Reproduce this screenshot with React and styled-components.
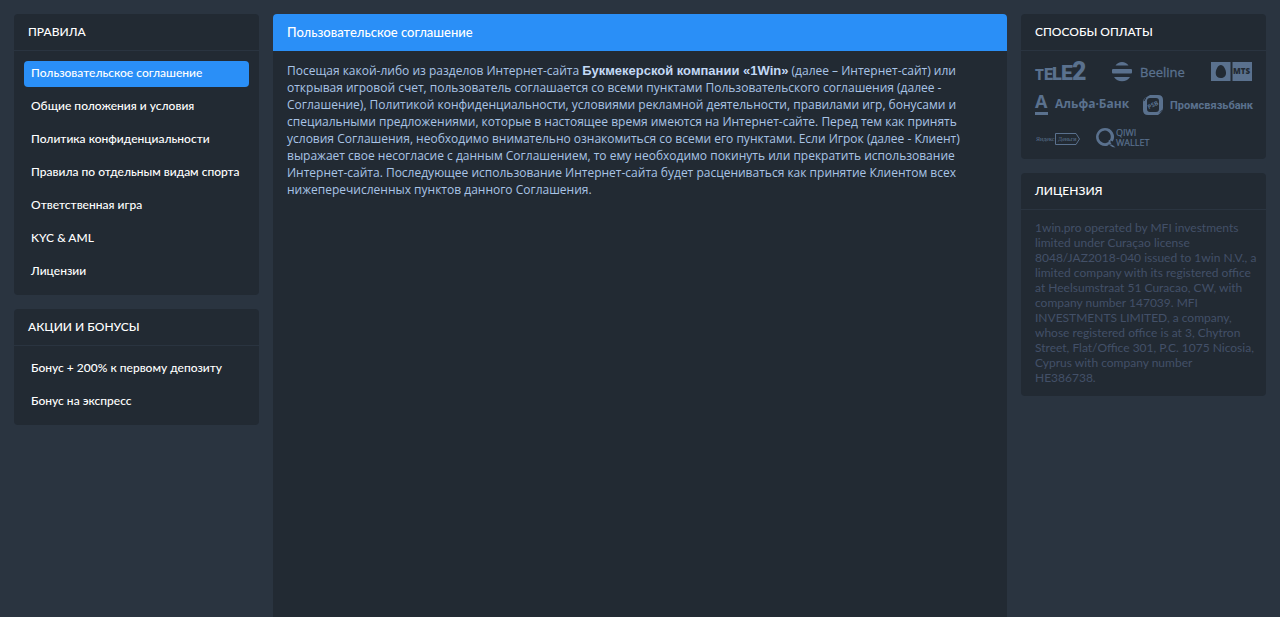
import React from "react";
import styled, { createGlobalStyle, ThemeProvider } from "styled-components";

const theme = {
  page: "#2a3440",
  card: "#222a33",
  line: "#2a3440",
  accent: "#2a8ff7",
  heading: "#ffffff",
  body: "#a9c4e6",
  muted: "#435068",
  logo: "#5a718e",
};

const GlobalStyle = createGlobalStyle`
  *, *::before, *::after { box-sizing: border-box; }
  body {
    margin: 0;
    background: ${theme.page};
    color: ${theme.heading};
    font-family: Lato, "Open Sans", sans-serif;
    font-size: 12px;
    line-height: 15px;
  }
`;

const Page = styled.div`
  display: grid;
  grid-template-columns: 245px minmax(0, 1fr) 245px;
  gap: 14px;
  min-height: 100vh;
  padding: 14px 14px 0;
`;

const Column = styled.aside`
  display: flex;
  flex-direction: column;
  gap: 14px;
`;

const Card = styled.section`
  background: ${(p) => p.theme.card};
  border-radius: 4px;
`;

const CardTitle = styled.h2`
  margin: 0;
  padding: 10px 14px 11px;
  border-bottom: 1px solid ${(p) => p.theme.line};
  font-size: 12px;
  font-weight: 500;
  line-height: 15px;
  text-transform: uppercase;
`;

const Menu = styled.ul`
  display: flex;
  flex-direction: column;
  gap: 7px;
  margin: 0;
  padding: 10px;
  list-style: none;
`;

const MenuLink = styled.a`
  display: block;
  padding: 4px 7px 7px;
  border-radius: 4px;
  background: ${(p) => (p.$active ? p.theme.accent : "transparent")};
  color: ${(p) => p.theme.heading};
  font-weight: 500;
  text-decoration: none;
  white-space: nowrap;
`;

const Article = styled.main`
  background: ${(p) => p.theme.card};
  border-radius: 4px 4px 0 0;
  overflow: hidden;
`;

const ArticleTitle = styled.h1`
  margin: 0;
  padding: 10px 14px;
  background: ${(p) => p.theme.accent};
  font-size: 13px;
  font-weight: 500;
  line-height: 17px;
`;

const ArticleText = styled.p`
  margin: 0;
  padding: 11px 14px;
  color: ${(p) => p.theme.body};
  font-family: "Open Sans", sans-serif;
  line-height: 17px;

  strong {
    font-family: "Liberation Sans", sans-serif;
    font-size: 13px;
    font-weight: 700;
    line-height: 1;
    color: #c3d9f5;
  }
`;

const LicenseText = styled.p`
  margin: 0;
  padding: 10px 8px 11px 14px;
  color: ${(p) => p.theme.muted};
`;

const Payments = styled.div`
  display: flex;
  flex-direction: column;
  gap: 11px;
  padding: 10px 14px;
`;

const PaymentRow = styled.div`
  display: flex;
  justify-content: ${(p) => (p.$start ? "flex-start" : "space-between")};
  gap: 13px;
`;

const Logo = styled.svg`
  display: block;
  flex: none;
  overflow: visible;
  fill: ${(p) => p.theme.logo};
  stroke: none;
  font-family: "Open Sans", sans-serif;
`;

const Tele2 = () => (
  <Logo width="51" height="22" role="img" aria-label="Tele2">
    <text y="19" fontFamily="Roboto, sans-serif" fontWeight="900">
      <tspan x="0" fontSize="14">T</tspan>
      <tspan x="9" fontSize="16">E</tspan>
      <tspan x="17" fontSize="18">L</tspan>
      <tspan x="26" fontSize="21">E</tspan>
      <tspan x="37" fontSize="25">2</tspan>
    </text>
  </Logo>
);

const Beeline = () => (
  <Logo width="73" height="22" role="img" aria-label="Beeline">
    <path d="M3.500 4.600 C5 2.200 7.300 1 10 1 C12.700 1 15 2.200 16.500 4.600 Z" />
    <rect x="0" y="8" width="20" height="4.500" rx="1" />
    <path d="M2 16 H18 C16 19 13.500 20.300 10 20.300 C6.500 20.300 4 19 2 16 Z" />
    <text x="28" y="16" fontSize="13" stroke={theme.logo} strokeWidth="0.3">Beeline</text>
  </Logo>
);

const Mts = () => (
  <Logo width="41" height="22" role="img" aria-label="MTS">
    <rect x="0" y="1" width="19.500" height="19" />
    <rect x="21.500" y="1" width="19.500" height="19" />
    <path fill={theme.card} d="M9.800 4 C12.500 4 15 8.500 15 12 C15 15.300 12.800 17 9.800 17 C6.800 17 4.700 15.300 4.700 12 C4.700 8.500 7.100 4 9.800 4 Z" />
    <text x="22" y="13" fontSize="8" fontWeight="800" fill={theme.card}>MTS</text>
  </Logo>
);

const Alfa = () => (
  <Logo width="95" height="22" role="img" aria-label="Альфа-Банк">
    <text x="0" y="14" fontSize="18" fontWeight="700">А</text>
    <rect x="0" y="18" width="13" height="3" />
    <text x="20" y="14" fontSize="12" fontWeight="700">Альфа·Банк</text>
  </Logo>
);

const Psb = () => (
  <Logo width="109" height="22" role="img" aria-label="Промсвязьбанк">
    <path fillRule="evenodd" d="M7 1 H15 Q20 1 20 6 V14 Q20 17 17.500 19 L15 21 H5 Q0 21 0 16 V8 Q0 5.500 2 4 Z M7 4 Q4 4 4 7 V15 Q4 18 7 18 H13 Q16 18 16 15 V7 Q16 4 13 4 Z" />
    <path d="M3 3.500 L1 7 M17 18.500 L19.500 16" stroke={theme.card} strokeWidth="1" />
    <text x="10" y="13" fontSize="6" fontWeight="700" textAnchor="middle" transform="rotate(-25 10 11)">PSB</text>
    <text x="27" y="15" fontSize="11" fontWeight="700" fontFamily="Roboto, sans-serif">Промсвязьбанк</text>
  </Logo>
);

const Yandex = () => (
  <Logo width="48" height="22" role="img" aria-label="Яндекс Деньги">
    <g fontFamily="Liberation Serif, serif" fontSize="6">
      <text x="1" y="14">Яндекс</text>
      <text x="23" y="14">Деньги</text>
    </g>
    <path fill="none" stroke={theme.logo} d="M20.500 6.500 H41 L44.500 12 L41 17.500 H20.500 Z" />
  </Logo>
);

const Qiwi = () => (
  <Logo width="54" height="22" role="img" aria-label="QIWI Wallet">
    <path fillRule="evenodd" d="M9 1 A9 9 0 0 1 16.800 14.500 L14.500 13.500 Q14 15.500 16 17.500 Q12.500 16.500 12 18.500 A9 9 0 1 1 9 1 Z M9 3.500 A6.300 6.300 0 1 0 12.500 15 Q12 13 14 12.800 A6.300 6.300 0 0 0 9 3.500 Z" />
    <path d="M13 17.500 Q17 17.200 19.500 20.500 Q15 20 13 17.500 Z" />
    <text x="20" y="9" fontSize="9" stroke={theme.logo} strokeWidth="0.2">QIWI</text>
    <text x="20" y="19" fontSize="9" stroke={theme.logo} strokeWidth="0.2">WALLET</text>
  </Logo>
);

const rules = [
  "Пользовательское соглашение",
  "Общие положения и условия",
  "Политика конфиденциальности",
  "Правила по отдельным видам спорта",
  "Ответственная игра",
  "KYC & AML",
  "Лицензии",
];

const bonuses = ["Бонус + 200% к первому депозиту", "Бонус на экспресс"];

function MenuCard({ title, items, active }) {
  return (
    <Card>
      <CardTitle>{title}</CardTitle>
      <nav aria-label={title}>
        <Menu>
          {items.map((item, i) => (
            <li key={item}>
              <MenuLink href="#" $active={i === active} aria-current={i === active ? "page" : undefined}>
                {item}
              </MenuLink>
            </li>
          ))}
        </Menu>
      </nav>
    </Card>
  );
}

export default function App() {
  return (
    <ThemeProvider theme={theme}>
      <GlobalStyle />
      <Page>
        <Column>
          <MenuCard title="Правила" items={rules} active={0} />
          <MenuCard title="Акции и бонусы" items={bonuses} />
        </Column>
        <Article>
          <ArticleTitle>Пользовательское соглашение</ArticleTitle>
          <ArticleText>
            Посещая какой-либо из разделов Интернет-сайта <strong>Букмекерской компании «1Win»</strong> (далее –
            Интернет-сайт) или открывая игровой счет, пользователь соглашается со всеми пунктами Пользовательского
            соглашения (далее - Соглашение), Политикой конфиденциальности, условиями рекламной деятельности, правилами
            игр, бонусами и специальными предложениями, которые в настоящее время имеются на Интернет-сайте. Перед тем
            как принять условия Соглашения, необходимо внимательно ознакомиться со всеми его пунктами. Если Игрок
            (далее - Клиент) выражает свое несогласие с данным Соглашением, то ему необходимо покинуть или прекратить
            использование Интернет-сайта. Последующее использование Интернет-сайта будет расцениваться как принятие
            Клиентом всех нижеперечисленных пунктов данного Соглашения.
          </ArticleText>
        </Article>
        <Column>
          <Card>
            <CardTitle>Способы оплаты</CardTitle>
            <Payments>
              <PaymentRow>
                <Tele2 />
                <Beeline />
                <Mts />
              </PaymentRow>
              <PaymentRow>
                <Alfa />
                <Psb />
              </PaymentRow>
              <PaymentRow $start>
                <Yandex />
                <Qiwi />
              </PaymentRow>
            </Payments>
          </Card>
          <Card>
            <CardTitle>Лицензия</CardTitle>
            <LicenseText>
              1win.pro operated by MFI investments limited under Curaçao license 8048/JAZ2018-040 issued to 1win N.V.,
              a limited company with its registered office at Heelsumstraat 51 Curacao, CW, with company number 147039.
              MFI INVESTMENTS LIMITED, a company, whose registered office is at 3, Chytron Street, Flat/Office 301,
              P.C. 1075 Nicosia, Cyprus with company number
              <br />
              HE386738.
            </LicenseText>
          </Card>
        </Column>
      </Page>
    </ThemeProvider>
  );
}
